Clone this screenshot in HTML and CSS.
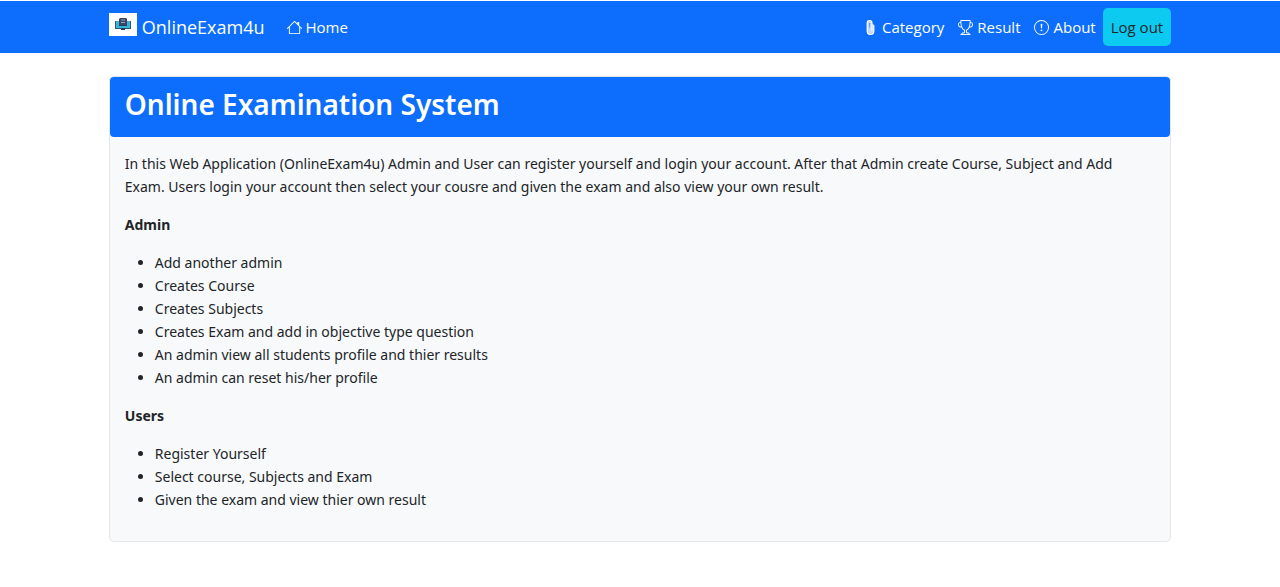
FILE: index.html
```html
<!DOCTYPE html>
<html lang="en">
<head>
<meta charset="utf-8">
<meta name="viewport" content="width=device-width, initial-scale=1">
<title>OnlineExam4u</title>
<link rel="stylesheet" href="styles.css">
</head>
<body>
<header class="navbar">
  <nav class="container nav-inner">
    <a class="brand" href="#">
      <svg class="brand-logo" viewBox="0 0 28 23" aria-hidden="true">
        <path fill="#fff" d="M0 0h28v23H0z"/>
        <path fill="#2d5878" d="M6 8h16v8H6z"/>
        <path fill="#35b5d8" d="M7 8h14v7H7z"/>
        <path fill="#3c4565" d="M10 6l1-1h6l1 1v6h-8z"/>
        <path fill="#9aa5c0" d="M12 6.500h4v1h-4zM12 9h4v1h-4z"/>
        <path fill="#263b59" d="M10 12h8v1h-8zM12 15h4v2h-4z"/>
      </svg>
      <span>OnlineExam4u</span>
    </a>
    <a class="nav-link" href="#">
      <svg class="icon" viewBox="0 0 16 16" aria-hidden="true"><path d="M8.354 1.146a.5.5 0 0 0-.708 0l-6 6-1.500 1.500a.5.5 0 1 0 .708.708L2 8.207V14.500a.5.5 0 0 0 .5.5h11a.5.5 0 0 0 .5-.5V8.207l1.146 1.147a.5.5 0 0 0 .708-.708L13 5.793V2.500a.5.5 0 0 0-.5-.5h-1a.5.5 0 0 0-.5.5v1.293zM3 14V7.207l5-5 5 5V14z"/></svg>
      <span>Home</span>
    </a>
    <div class="nav-right">
      <a class="nav-link" href="#">
        <svg class="icon" viewBox="0 0 16 16" aria-hidden="true"><path fill-opacity=".75" d="M4 3a3 3 0 0 1 6 0v1.200a2.500 2.500 0 0 1 2 2.300V12a4 4 0 0 1-8 0z"/><path d="M4 3a3 3 0 0 1 6 0v9H9V3a2 2 0 0 0-4 0v9a3 3 0 0 0 6 0V5h1v7a4 4 0 0 1-8 0z"/><path fill="#0d6efd" fill-opacity=".6" d="M6.500 3.500a.5.5 0 0 1 1 0V8h-1z"/></svg>
        <span>Category</span>
      </a>
      <a class="nav-link" href="#">
        <svg class="icon" viewBox="0 0 16 16" aria-hidden="true"><path d="M2.500.5A.5.5 0 0 1 3 0h10a.5.5 0 0 1 .5.5q0 .807-.034 1.536a3 3 0 1 1-1.133 5.890c-.79 1.865-1.878 2.777-2.833 3.011v2.173l1.425.356c.194.048.377.135.537.255L13.300 15.100a.5.5 0 0 1-.3.900H3a.5.5 0 0 1-.3-.900l1.838-1.379c.160-.120.343-.207.537-.255L6.500 13.110v-2.173c-.955-.234-2.043-1.146-2.833-3.012a3 3 0 1 1-1.132-5.890A33 33 0 0 1 2.500.5m.099 2.540a2 2 0 0 0 .720 3.935c-.333-1.050-.588-2.346-.720-3.935m10.083 3.935a2 2 0 0 0 .720-3.935c-.133 1.590-.388 2.885-.720 3.935M3.504 1q.010.775.056 1.469c.130 2.028.457 3.546.870 4.667C5.294 9.480 6.484 10 7 10a.5.5 0 0 1 .5.5v2.610a1 1 0 0 1-.757.970l-1.426.356a.5.5 0 0 0-.179.085L4.500 15h7l-.638-.479a.5.5 0 0 0-.180-.085l-1.425-.356a1 1 0 0 1-.757-.970V10.500A.5.5 0 0 1 9 10c.516 0 1.706-.520 2.570-2.864.413-1.120.740-2.640.870-4.667q.045-.694.056-1.469z"/></svg>
        <span>Result</span>
      </a>
      <a class="nav-link" href="#">
        <svg class="icon" viewBox="0 0 16 16" aria-hidden="true"><path d="M8 15A7 7 0 1 1 8 1a7 7 0 0 1 0 14m0 1A8 8 0 1 0 8 0a8 8 0 0 0 0 16"/><path d="M7.002 11a1 1 0 1 1 2 0 1 1 0 0 1-2 0M7.100 4.995a.905.905 0 1 1 1.800 0l-.350 3.507a.552.552 0 0 1-1.100 0z"/></svg>
        <span>About</span>
      </a>
      <a class="logout" href="#">Log out</a>
    </div>
  </nav>
</header>
<main class="container">
  <section class="card">
    <h1 class="card-header">Online Examination System</h1>
    <div class="card-body">
      <p>In this Web Application (OnlineExam4u) Admin and User can register yourself and login your account. After that Admin create Course, Subject and Add Exam. Users login your account then select your cousre and given the exam and also view your own result.</p>
      <p><strong>Admin</strong></p>
      <ul>
        <li>Add another admin</li>
        <li>Creates Course</li>
        <li>Creates Subjects</li>
        <li>Creates Exam and add in objective type question</li>
        <li>An admin view all students profile and thier results</li>
        <li>An admin can reset his/her profile</li>
      </ul>
      <p><strong>Users</strong></p>
      <ul>
        <li>Register Yourself</li>
        <li>Select course, Subjects and Exam</li>
        <li>Given the exam and view thier own result</li>
      </ul>
    </div>
  </section>
</main>
</body>
</html>
```

FILE: styles.css
```css
* {
  box-sizing: border-box;
}

body {
  margin: 0;
  background: #fff;
  color: #212529;
  font-family: "Noto Sans", "Open Sans", sans-serif;
  font-size: 14px;
  line-height: 23px;
}

.container {
  width: 83%;
  margin: 0 auto;
}

.navbar {
  margin-top: 1px;
  padding: 7px 0;
  background: #0d6efd;
  font-family: "Open Sans", "Noto Sans", sans-serif;
  font-size: 15px;
  line-height: 22px;
}

.nav-inner,
.nav-right,
.brand,
.nav-link {
  display: flex;
  align-items: center;
}

.brand,
.nav-link {
  color: #fff;
  text-decoration: none;
}

.brand {
  gap: 5px;
  margin-right: 15px;
  font-size: 18px;
}

.brand-logo {
  width: 28px;
  height: 23px;
  margin-bottom: 6px;
}

.nav-link {
  gap: 4px;
  padding: 8px 7px;
}

.icon {
  width: 15px;
  height: 15px;
  fill: currentColor;
}

.nav-right {
  margin-left: auto;
}

.logout {
  padding: 8px;
  border-radius: 5px;
  background: #0dcaf0;
  color: #212529;
  text-decoration: none;
}

.card {
  margin-top: 23px;
  border: 1px solid #e4e6e8;
  border-radius: 5px;
  background: #f8f9fa;
}

.card-header {
  margin: 0;
  padding: 9px 15px 15px;
  border-radius: 4px;
  background: #0d6efd;
  color: #fff;
  font-size: 28px;
  font-weight: 600;
  line-height: 36px;
}

.card-body {
  padding: 15px;
}

.card-body p,
.card-body ul {
  margin: 0 0 15px;
}

.card-body ul {
  padding-left: 30px;
}
```
